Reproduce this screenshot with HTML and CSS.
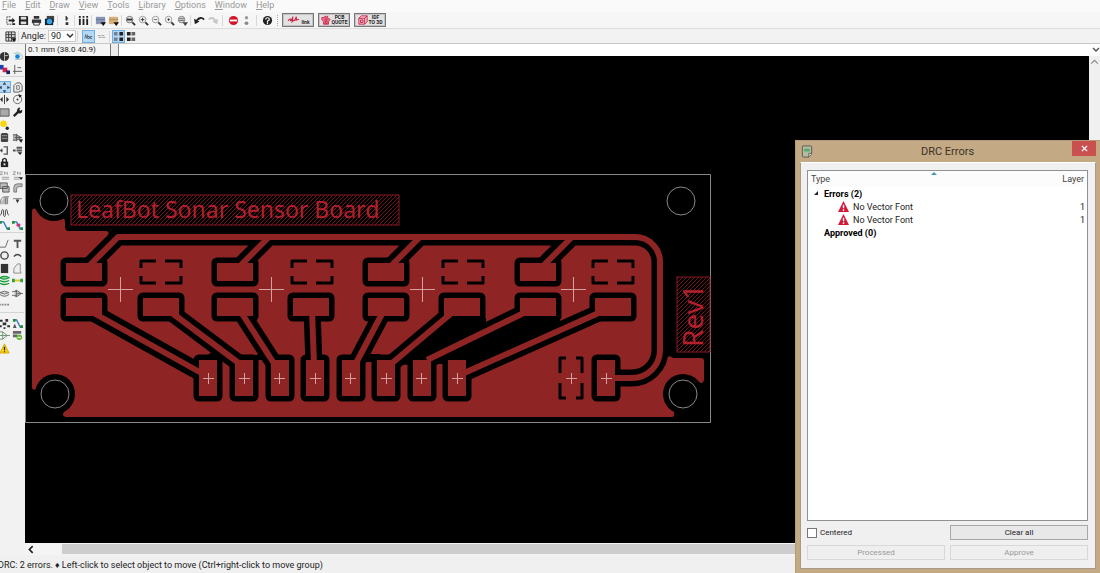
FILE: index.html
```html
<!DOCTYPE html>
<html lang="en">
<head>
  <meta charset="UTF-8">
  <meta name="viewport" content="width=device-width, initial-scale=1.0">
  <title>PCB layout - DRC Errors</title>
  <link rel="stylesheet" href="styles.css">
</head>
<body>
<div class="app">
  <nav class="menu">
    <a href="#"><u>F</u>ile</a>
    <a href="#"><u>E</u>dit</a>
    <a href="#"><u>D</u>raw</a>
    <a href="#"><u>V</u>iew</a>
    <a href="#"><u>T</u>ools</a>
    <a href="#"><u>L</u>ibrary</a>
    <a href="#"><u>O</u>ptions</a>
    <a href="#"><u>W</u>indow</a>
    <a href="#"><u>H</u>elp</a>
  </nav>

  <div class="toolbar main-tools">
    <button class="tool" aria-label="Open"><svg viewBox="0 0 12 12"><path d="M6 2H2v8h5" fill="none" stroke="#333" stroke-dasharray="2 1"/><path d="M4 5h4V3l3 3-3 3V7H4zM8 9h3v2H8z" fill="#222"/></svg></button>
    <button class="tool" aria-label="Save"><svg viewBox="0 0 12 12"><path d="M1 1h9l1 1v9H1z" fill="#222"/><path d="M3 2h6v3H3zM3 7h6v3H3z" fill="#ddd"/></svg></button>
    <button class="tool" aria-label="Print"><svg viewBox="0 0 12 12"><path d="M3 1h6v3H3zM1 5h10v4H1z" fill="#333"/><path d="M3 8h6v3H3z" fill="#eee" stroke="#333"/></svg></button>
    <button class="tool" aria-label="Snapshot"><svg viewBox="0 0 12 12"><path d="M3 1h8v7H3z" fill="#444"/><path d="M1 4h9v7H1z" fill="#123"/><circle cx="6" cy="7" r="3" fill="#38a4e8"/></svg></button>
    <span class="sep"></span>
    <button class="tool" aria-label="Move layer"><svg viewBox="0 0 12 12"><path d="M6 1l2 3H7v2H5V1zM5 8h3v3H5z" fill="#333"/></svg></button>
    <span class="sep"></span>
    <button class="tool" aria-label="Library manager"><svg viewBox="0 0 12 12"><path d="M1 1h2v2H1zM5 1h2v2H5zM9 1h2v2H9zM1 4h2v7H1zM5 4h2v7H5zM9 4h2v7H9z" fill="#222"/></svg></button>
    <span class="sep"></span>
    <button class="tool" aria-label="Layer view"><svg viewBox="0 0 12 12"><path d="M1 2h10v8H1z" fill="#8794b5"/><path d="M1 5h10" stroke="#6a7899"/><path d="M6 8h6l-3 4z" fill="#111"/></svg></button>
    <button class="tool" aria-label="Component view"><svg viewBox="0 0 12 12"><path d="M1 2h10v8H1z" fill="#dcae72"/><path d="M1 5h10" stroke="#a58f78"/><path d="M6 8h6l-3 4z" fill="#111"/></svg></button>
    <span class="sep"></span>
    <button class="tool" aria-label="Zoom area"><svg viewBox="0 0 12 12"><circle cx="5" cy="5" r="3.6" fill="#ddd" stroke="#777"/><path d="M2 4h6v2H2z" fill="#333"/><path d="M8 8l3 3" stroke="#333" stroke-width="2"/></svg></button>
    <button class="tool" aria-label="Zoom in"><svg viewBox="0 0 12 12"><circle cx="5" cy="5" r="3.6" fill="#f4f4f4" stroke="#999"/><path d="M3 5h4M5 3v4" stroke="#333"/><path d="M8 8l3 3" stroke="#333" stroke-width="2"/></svg></button>
    <button class="tool" aria-label="Zoom out"><svg viewBox="0 0 12 12"><circle cx="5" cy="5" r="3.6" fill="#f4f4f4" stroke="#999"/><path d="M3 5h4" stroke="#666"/><path d="M8 8l3 3" stroke="#333" stroke-width="2"/></svg></button>
    <button class="tool" aria-label="Zoom point"><svg viewBox="0 0 12 12"><circle cx="5" cy="5" r="3.6" fill="#f4f4f4" stroke="#999"/><circle cx="5" cy="5" r="1.2" fill="#222"/><path d="M8 8l3 3" stroke="#333" stroke-width="2"/></svg></button>
    <button class="tool" aria-label="Zoom all"><svg viewBox="0 0 12 12"><circle cx="5" cy="5" r="3.6" fill="#ccc" stroke="#888"/><path d="M2 4h6M2 6h6" stroke="#777"/><path d="M6 8h6l-3 4z" fill="#444"/></svg></button>
    <span class="sep"></span>
    <button class="tool" aria-label="Undo"><svg viewBox="0 0 12 12"><path d="M3 6q4-5 8-1" fill="none" stroke="#222" stroke-width="2"/><path d="M0 4l6 3-5 3z" fill="#222"/></svg></button>
    <button class="tool" aria-label="Redo" disabled><svg viewBox="0 0 12 12"><path d="M9 6Q5 1 2 5" fill="none" stroke="#c4c4c4" stroke-width="2"/><path d="M12 4L6 7l5 3z" fill="#c4c4c4"/></svg></button>
    <span class="sep wide"></span>
    <button class="tool" aria-label="Cancel"><svg viewBox="0 0 12 12"><circle cx="6" cy="6" r="5" fill="#d3122a"/><path d="M2 5h8v2H2z" fill="#fff"/></svg></button>
    <button class="tool" aria-label="Signal"><svg viewBox="0 0 12 12"><circle cx="6" cy="3" r="1.8" fill="#999"/><circle cx="6" cy="9" r="2" fill="#888"/></svg></button>
    <span class="sep wide"></span>
    <button class="tool" aria-label="Help"><svg viewBox="0 0 12 12"><circle cx="6" cy="6" r="5" fill="#222"/><path d="M4 5q0-2 2-2t2 1.500-2 2v1M6 8v2" fill="none" stroke="#fff" stroke-width="1.300"/></svg></button>
    <span class="sep wide dotted"></span>
    <button class="badge"><svg class="wide-mark" viewBox="0 0 14 12"><path d="M1 7q3-4 3-1t3-4l-1 6q3-3 3-1l2-5v4l3-1" fill="none" stroke="#d02045" stroke-width="1.300"/></svg><span class="low">link</span></button>
    <button class="badge"><svg viewBox="0 0 12 12"><path d="M1 3h3l1-2 1 2 2-2v3l3 1-2 3v3H3V8L1 6z" fill="#e08095" stroke="#d02045"/><path d="M5 4v7M7 4v7" stroke="#c91840"/></svg><span>PCB<br>QUOTE</span></button>
    <button class="badge"><svg viewBox="0 0 12 12"><path d="M1 4l3-3h7v7l-3 3H1zM1 4h7v7M8 4l3-3M3 6h3v3H3z" fill="#f0bfc9" stroke="#c91840"/></svg><span>IDF<br>TO 3D</span></button>
  </div>

  <div class="toolbar angle-tools">
    <button class="tool" aria-label="Grid"><svg viewBox="0 0 12 12"><path d="M1 1h10v10H1zM1 4h10M1 7h10M4 1v10M7 1v10" fill="#ddd" stroke="#333"/><path d="M7 8h5l-2 4z" fill="#111"/></svg></button>
    <span class="sep"></span>
    <label for="angle">Angle:</label>
    <span class="pick">
      <select id="angle" class="angle"><option>90</option><option>45</option></select>
      <svg class="chevron" viewBox="0 0 8 8"><path d="M1 2l3 3 3-3" fill="none" stroke="#333" stroke-width="1.500"/></svg>
    </span>
    <span class="sep wide"></span>
    <button class="tool on" aria-label="Show text"><svg viewBox="0 0 12 12"><path d="M2 8l1-4 1 4M5 4v4h2V6H5M10 6H8v2h2" fill="none" stroke="#567"/></svg></button>
    <button class="tool" aria-label="Hide text"><svg viewBox="0 0 12 12"><path d="M2 5h8M3 7h8" stroke="#999" stroke-dasharray="3 1"/></svg></button>
    <span class="sep"></span>
    <button class="tool on" aria-label="Pad view"><svg viewBox="0 0 12 12"><path d="M1 1h4v4H1zM1 7h4v4H1z" fill="#6e8299"/><path d="M7 1h4v4H7zM7 7h4v4H7z" fill="#222"/></svg></button>
    <button class="tool" aria-label="Outline view"><svg viewBox="0 0 12 12"><path d="M1 1h4v4H1zM1 7h4v4H1z" fill="#222"/><path d="M6 1h4v4H6zM6 7h4v4H6z" fill="#666"/></svg></button>
  </div>

  <div class="workspace">
    <aside class="side">
      <div class="group rows-2">
        <button class="tool" aria-label="3D"><svg viewBox="0 0 12 12"><circle cx="6" cy="6" r="5" fill="#333"/><path d="M6 1v10M6 5h4" stroke="#bbb"/></svg></button>
        <button class="tool" aria-label="Web"><svg viewBox="0 0 12 12"><path d="M2 3q5-3 9 2t-8 4" fill="#eee" stroke="#9bb"/><circle cx="6" cy="6" r="2.500" fill="#1687d8"/></svg></button>
        <button class="tool" aria-label="Colors"><svg viewBox="0 0 12 12"><path d="M0 1h5v5H0z" fill="#1543b5"/><path d="M4 4h5v5H4z" fill="#d81e4e"/><path d="M8 7h4v4H8z" fill="#126"/></svg></button>
        <button class="tool" aria-label="Origin"><svg viewBox="0 0 12 12"><path d="M3 1v10M1 8h10M6 4h4" stroke="#555"/></svg></button>
      </div>
      <div class="group rows-12">
        <button class="tool on" aria-label="Move"><svg viewBox="0 0 12 12"><path d="M6 0l2 3H4zM6 12l2-3H4zM0 6l3-2v4zM12 6L9 4v4z" fill="#345"/></svg></button>
        <button class="tool" aria-label="Copy"><svg viewBox="0 0 12 12"><path d="M2 4l3-3h4l2 3v6H8v1H2z" fill="#eee" stroke="#555"/><path d="M5 4h3v4H5z" fill="none" stroke="#777"/></svg></button>
        <button class="tool" aria-label="Mirror"><svg viewBox="0 0 12 12"><path d="M6 1v10" stroke="#333"/><path d="M4 3v6L1 6zM8 3v6l3-3z" fill="#333"/></svg></button>
        <button class="tool" aria-label="Rotate"><svg viewBox="0 0 12 12"><circle cx="6" cy="6" r="4.500" fill="none" stroke="#666"/><circle cx="6" cy="6" r="1" fill="#222"/><path d="M7 0l4 2-3 2z" fill="#222"/></svg></button>
        <button class="tool" aria-label="Area"><svg viewBox="0 0 12 12"><path d="M1 2h10v8H1z" fill="#aaa" stroke="#555"/></svg></button>
        <button class="tool" aria-label="Properties"><svg viewBox="0 0 12 12"><path d="M2 10l5-5" stroke="#222" stroke-width="2.500"/><path d="M6 2q2-2 3-1L8 3l1 1 2-1q1 4-3 4T6 2" fill="#222"/></svg></button>
        <button class="tool" aria-label="Highlight net"><svg viewBox="0 0 12 12"><circle cx="5" cy="4" r="3.500" fill="#f7d707"/><circle cx="9" cy="9" r="1.800" fill="#222"/></svg></button>
        <span></span>
        <button class="tool" aria-label="Delete"><svg viewBox="0 0 12 12"><path d="M3 1h6v1h1v8l-1 1H3l-1-1V2h1z" fill="#444"/><path d="M3 4h6M3 7h6" stroke="#999"/></svg></button>
        <button class="tool" aria-label="Gate swap"><svg viewBox="0 0 12 12"><path d="M1 3h4l5 3-5 3H1M5 2v8M3 6h8" fill="#aaa" stroke="#555"/><path d="M7 8h5l-2 4z" fill="#222"/></svg></button>
        <button class="tool" aria-label="Connector"><svg viewBox="0 0 12 12"><path d="M0 6h4M5 2h4v8H5M3 4v4" fill="none" stroke="#555" stroke-width="1.500"/></svg></button>
        <button class="tool" aria-label="Align"><svg viewBox="0 0 12 12"><path d="M1 6h3M5 3h6M5 6h6" stroke="#555" stroke-width="2"/><path d="M6 8h5l-2 3z" fill="#222"/></svg></button>
        <button class="tool" aria-label="Lock"><svg viewBox="0 0 12 12"><path d="M4 6V3q2-3 4 0v3" fill="none" stroke="#222" stroke-width="1.500"/><path d="M2 5h8v6H2z" fill="#222"/><path d="M5 7h2v2H5z" fill="#eee"/></svg></button>
        <span></span>
        <button class="tool" aria-label="Rename"><svg viewBox="0 0 12 12"><path d="M1 2h3L1 5h3M6 5V2l3 3V2M3 8h8M3 10h8" fill="none" stroke="#999"/></svg></button>
        <button class="tool" aria-label="Renumber"><svg viewBox="0 0 12 12"><path d="M1 2h3L1 5h3M6 5V2l3 3V2M2 8h6M2 10h6" fill="none" stroke="#999"/><path d="M7 8h5l-2 3z" fill="#222"/></svg></button>
        <button class="tool" aria-label="Duplicate"><svg viewBox="0 0 12 12"><path d="M1 1h8v6H1zM4 5h7v6H4z" fill="#bbb" stroke="#555"/></svg></button>
        <button class="tool" aria-label="Fillet"><svg viewBox="0 0 12 12"><path d="M2 11V6q0-4 4-4h5v3H8Q5 5 5 8v3z" fill="#bbb" stroke="#777"/></svg></button>
        <button class="tool" aria-label="Chamfer"><svg viewBox="0 0 12 12"><path d="M1 10h9V2H6z" fill="#bbb"/><path d="M1 10q1-8 5-8h5M7 3v7M9 3v7" fill="none" stroke="#777"/></svg></button>
        <button class="tool" aria-label="Break"><svg viewBox="0 0 12 12"><path d="M1 4h10" stroke="#777"/><path d="M4 5h4L6 9z" fill="#333"/></svg></button>
        <button class="tool" aria-label="Meander"><svg viewBox="0 0 12 12"><path d="M1 8q2 0 2-5 1-3 2 0v5q1 3 2 0V3q1-3 2 0 0 5 2 5" fill="none" stroke="#444"/></svg></button>
        <span></span>
        <button class="tool" aria-label="Route"><svg viewBox="0 0 12 12"><path d="M2 2h3l4 8h2" fill="none" stroke="#3578c8" stroke-width="1.500"/><path d="M0 1h3v3H0zM9 8h3v3H9z" fill="#208b3e"/></svg></button>
        <button class="tool" aria-label="Edit route"><svg viewBox="0 0 12 12"><path d="M2 2h3l4 8h2" fill="none" stroke="#3578c8" stroke-width="1.500"/><path d="M0 1h3v3H0zM9 8h3v3H9z" fill="#208b3e"/><path d="M5 4h4v3H5z" fill="#d42c73"/></svg></button>
      </div>
      <div class="group rows-6">
        <button class="tool" aria-label="Line"><svg viewBox="0 0 12 12"><path d="M1 10h6l3-8" fill="none" stroke="#666"/></svg></button>
        <button class="tool" aria-label="Text"><svg viewBox="0 0 12 12"><path d="M2 2h8v2H7v7H5V4H2z" fill="#555"/></svg></button>
        <button class="tool" aria-label="Circle"><svg viewBox="0 0 12 12"><circle cx="6" cy="6" r="4" fill="#eee" stroke="#444" stroke-width="1.500"/></svg></button>
        <button class="tool" aria-label="Arc"><svg viewBox="0 0 12 12"><path d="M2 7q4-4 8 0" fill="none" stroke="#444" stroke-width="1.500"/></svg></button>
        <button class="tool" aria-label="Rectangle"><svg viewBox="0 0 12 12"><path d="M2 1h8v10H2z" fill="#333"/></svg></button>
        <button class="tool" aria-label="Polygon"><svg viewBox="0 0 12 12"><path d="M2 11V6l4-5h3v7l1 3z" fill="#eee" stroke="#888"/></svg></button>
        <button class="tool" aria-label="Copper layer"><svg viewBox="0 0 12 12"><path d="M1 3q5-3 10 0-5 3-10 0M1 6q5 3 10 0M1 9q5 3 10 0" fill="#9fd9a8" stroke="#189a38" stroke-width="1.500"/></svg></button>
        <button class="tool" aria-label="Jumper"><svg viewBox="0 0 12 12"><path d="M2 6h8" stroke="#e6c51b" stroke-width="2"/><path d="M0 4h3v4H0zM9 4h3v4H9z" fill="#27a244"/></svg></button>
        <button class="tool" aria-label="Plane"><svg viewBox="0 0 12 12"><path d="M1 5q5-3 10 0-5 3-10 0M1 7q5 4 10 0" fill="#ddd" stroke="#666"/></svg></button>
        <button class="tool" aria-label="Component"><svg viewBox="0 0 12 12"><path d="M3 3h3l4 3-4 3H3M5 2v8M0 4h5M0 8h5M6 6h6" fill="#bbb" stroke="#666"/></svg></button>
        <button class="tool" aria-label="Dimension"><svg viewBox="0 0 12 12"><path d="M0 5h11" stroke="#888" stroke-width="2" stroke-dasharray="2 1"/></svg></button>
        <span></span>
      </div>
      <div class="group rows-3">
        <button class="tool" aria-label="Autoplace"><svg viewBox="0 0 12 12"><path d="M1 2h3v2H1zM7 1h3v3H7zM4 5h4v3H4zM0 8h3v2H0zM9 8h3v2H9zM5 10h2v2H5z" fill="#333"/></svg></button>
        <button class="tool" aria-label="Autoroute"><svg viewBox="0 0 12 12"><path d="M2 2h3l4 8h2" fill="none" stroke="#3578c8" stroke-width="1.500"/><path d="M1 1h3v3H1zM9 8h3v3H9z" fill="#208b3e"/><path d="M1 11l2-5 2 5z" fill="#555"/></svg></button>
        <button class="tool" aria-label="Simulate"><svg viewBox="0 0 12 12"><path d="M1 2h3l5 4-5 4H1M0 6h12M4 2v8" fill="none" stroke="#68906c"/></svg></button>
        <button class="tool" aria-label="Add part"><svg viewBox="0 0 12 12"><path d="M1 1h9v3H1zM1 5h5v3H1z" fill="#666"/><circle cx="8" cy="8" r="3" fill="#63b52d"/><path d="M6 8h4" stroke="#fff"/></svg></button>
        <button class="tool" aria-label="Design rule check"><svg viewBox="0 0 12 12"><path d="M6 1l5 10H1z" fill="#f8cf12" stroke="#d9a900"/><path d="M6 4v4M6 9v1" stroke="#222" stroke-width="1.300"/></svg></button>
        <span></span>
      </div>
    </aside>

    <main class="editor">
      <div class="coords">
        <span class="position">0.1 mm (38.0 40.9)</span>
        <span class="grip"></span>
        <span class="pick history">
          <select class="message" aria-label="Message history"><option></option></select>
          <svg class="chevron" viewBox="0 0 8 8"><path d="M1 2l3 3 3-3" fill="none" stroke="#555" stroke-width="1.500"/></svg>
        </span>
      </div>
      <div class="view">
        <div class="canvas">
          <svg class="board" viewBox="25 56 1064 487" preserveAspectRatio="xMinYMin slice">
            <defs>
              <pattern id="hatch" width="4" height="4" patternUnits="userSpaceOnUse">
                <path d="M-1 1l2-2M0 4l4-4M3 5l2-2" stroke="#6c141d"/>
              </pattern>
              <g id="cross"><path d="M-12 0h25M0-12v25"/></g>
              <g id="small-cross"><path d="M-5 0h11M0-5v11"/></g>
              <path id="thermal" d="M-20-4v-7h15M4-11h16v7M20 4v7H4M-5 11h-15V4"/>
              <rect id="pad" x="-18" y="-9" width="36" height="18"/>
              <rect id="pin" x="-9" y="-18" width="18" height="36"/>
              <g id="pads">
                <use href="#pad" x="84" y="272"/><use href="#pad" x="235" y="272"/><use href="#pad" x="386" y="272"/><use href="#pad" x="538" y="272"/>
                <use href="#pad" x="84" y="307"/><use href="#pad" x="161" y="307"/><use href="#pad" x="235" y="307"/><use href="#pad" x="311" y="307"/>
                <use href="#pad" x="386" y="307"/><use href="#pad" x="462" y="307"/><use href="#pad" x="538" y="307"/><use href="#pad" x="613" y="307"/>
                <use href="#pin" x="208" y="378"/><use href="#pin" x="244" y="378"/><use href="#pin" x="280" y="378"/><use href="#pin" x="315" y="378"/>
                <use href="#pin" x="351" y="378"/><use href="#pin" x="386" y="378"/><use href="#pin" x="422" y="378"/><use href="#pin" x="457" y="378"/>
                <use href="#pin" x="606" y="378"/>
              </g>
              <path id="tracks" d="M87 268l31-31H635a25 25 0 0 1 25 25V350a28 28 0 0 1-28 28H610M238 268l31-31M389 268l31-31M541 268l31-31M90 311L205 375M168 310L240 364M239 309L275 365M312 310L314 365M384 310L355 365M454 311L391 364M530 310L427 360M603 311L462 374"/>
            </defs>
            <!-- copper pour -->
            <path class="copper" d="M32 212q0-5 4-3L54 201 64 219q1 0 1 3v5q0 4 4 4H106q4 0 2 4l8 4 2-2H635a25 25 0 0 1 25 25V350l8 7q2-2 5 1H701q3 0 3 3V380q-1 5-5 2L683 395 674 413q1 4-3 4H66q-5-1-2-5L56 395 38 388q-6 4-6-1z"/>
            <g class="gap">
              <circle cx="54" cy="201" r="20"/>
              <circle cx="55" cy="394" r="20"/>
              <circle cx="683" cy="394" r="20"/>
              <path d="M395 365L454 316 486 318V334L438 364zM430 364L525 316 560 318V326L466 372 448 364zM364 362V358L370 354H380V362zM208 355l5-4 10 5v4h-15zM256 355l6-2 6 7h-12z"/>
            </g>
            <use href="#pads" class="pad-gap"/>
            <use href="#tracks" class="track-gap"/>
            <use href="#pads" class="copper"/>
            <use href="#tracks" class="track"/>
            <g class="thermals">
              <use href="#thermal" x="161" y="272"/><use href="#thermal" x="312" y="272"/><use href="#thermal" x="463" y="272"/><use href="#thermal" x="613" y="272"/>
              <path d="M560 373V358h6M576 358h6v15M582 383v15h-6M566 398h-6V383"/>
            </g>
            <g class="crosses">
              <use href="#cross" x="120" y="289"/><use href="#cross" x="271" y="289"/><use href="#cross" x="422" y="289"/><use href="#cross" x="573" y="289"/>
              <use href="#small-cross" x="208" y="378"/><use href="#small-cross" x="244" y="378"/><use href="#small-cross" x="279" y="378"/><use href="#small-cross" x="315" y="378"/>
              <use href="#small-cross" x="350" y="378"/><use href="#small-cross" x="386" y="378"/><use href="#small-cross" x="421" y="378"/><use href="#small-cross" x="457" y="378"/>
              <use href="#small-cross" x="571" y="378"/><use href="#small-cross" x="606" y="378"/>
            </g>
            <!-- outline and drill holes -->
            <g class="outline">
              <path d="M25.500 174.500H710.500V422.500H25.500z"/>
              <circle cx="54" cy="201" r="14"/>
              <circle cx="681" cy="201" r="14"/>
              <circle cx="55" cy="394" r="14"/>
              <circle cx="683" cy="394" r="14"/>
            </g>
            <!-- text that has no vector font -->
            <rect class="text-box" x="71" y="195" width="328" height="30"/>
            <text class="silk" x="76" y="218">LeafBot Sonar Sensor Board</text>
            <rect class="text-box" x="677" y="277" width="33" height="75"/>
            <text class="silk rev" transform="translate(703 347) rotate(-90)">Rev1</text>
          </svg>
        </div>
        <div class="scroll-v"><svg viewBox="0 0 10 10"><path d="M2 7l3-3 3 3" fill="none" stroke="#888"/></svg></div>
      </div>
      <div class="scroll-h"><svg viewBox="0 0 10 10"><path d="M7 2L4 5l3 3" fill="none" stroke="#222" stroke-width="1.500"/></svg><span class="thumb"></span></div>
    </main>
  </div>

  <footer class="status"><span>DRC: 2 errors.</span><span>&#9830; Left-click to select object to move (Ctrl+right-click to move group)</span></footer>
</div>

<section class="dialog" role="dialog" aria-labelledby="dialog-title">
  <header class="dialog-head">
    <svg class="dialog-icon" viewBox="0 0 12 14"><path d="M2 1h8q1 0 1 1v8l-3 3H2q-1 0-1-1V2q0-1 1-1z" fill="#b5bd9c" stroke="#555"/><path d="M3 4h6v3H3z" fill="#58a878"/><path d="M11 9H8v4" fill="#eee" stroke="#555"/></svg>
    <h1 id="dialog-title">DRC Errors</h1>
    <button class="close" aria-label="Close"><svg viewBox="0 0 8 8"><path d="M1 1l6 6M7 1L1 7" stroke="#fff" stroke-width="1.600"/></svg></button>
  </header>
  <div class="dialog-body">
    <div class="list">
      <svg class="sort" viewBox="0 0 6 4"><path d="M0 4l3-3 3 3z" fill="#4598b8"/></svg>
      <table class="errors">
        <thead>
          <tr><th>Type</th><th class="layer">Layer</th></tr>
        </thead>
        <tbody>
          <tr class="parent"><td><svg class="arrow" viewBox="0 0 6 6"><path d="M5 1v4H1z" fill="#222"/></svg>Errors (2)</td><td></td></tr>
          <tr><td class="child"><svg class="warn" viewBox="0 0 12 12"><path d="M6 0l6 12H0z" fill="#d3183a"/><path d="M6 4v4M6 9v2" stroke="#fff" stroke-width="1.500"/></svg>No Vector Font</td><td class="layer">1</td></tr>
          <tr><td class="child"><svg class="warn" viewBox="0 0 12 12"><path d="M6 0l6 12H0z" fill="#d3183a"/><path d="M6 4v4M6 9v2" stroke="#fff" stroke-width="1.500"/></svg>No Vector Font</td><td class="layer">1</td></tr>
          <tr class="parent"><td class="no-arrow">Approved (0)</td><td></td></tr>
        </tbody>
      </table>
    </div>
    <div class="actions">
      <label class="centered"><input type="checkbox">Centered</label>
      <button>Clear all</button>
      <button disabled>Processed</button>
      <button disabled>Approve</button>
    </div>
  </div>
</section>
</body>
</html>
```
FILE: styles.css
```css
* { box-sizing: border-box; }
body { margin: 0; font-family: Roboto, "Open Sans", sans-serif; font-size: 9px; line-height: 12px; color: #222; background: #f0f0f0; overflow: hidden; }
button, select, input { font: inherit; color: inherit; margin: 0; padding: 0; }
svg { display: block; }
.app { display: flex; flex-direction: column; height: 100vh; }

/* menu and toolbars */
.menu { display: flex; gap: 9px; height: 12px; padding-left: 2px; background: #fafafa; line-height: 10px; }
.menu a { color: #999; text-decoration: none; }
.toolbar { display: flex; align-items: center; padding-left: 4px; background: #f2f2f2; border-bottom: 1px solid #c8c8c8; flex: none; }
.main-tools { height: 17px; background: #f6f6f6; border-color: #ddd; }
.angle-tools { height: 15px; }
.tool { display: flex; align-items: center; justify-content: center; width: 13px; height: 13px; border: 0; background: none; flex: none; }
.tool svg { width: 11px; height: 11px; flex: none; }
.tool.on { background: #b5d9f5; border: 1px solid #70aee0; }
.sep { width: 1px; height: 11px; margin: 0 2px 0 1px; background: #d8d8d8; flex: none; }
.sep.wide { margin: 0 4px 0 3px; }
.sep.dotted { background: none; border-left: 1px dotted #aaa; }
.badge { display: flex; align-items: center; justify-content: center; gap: 1px; width: 32px; height: 14px; margin: 0 4px 0 0; border: 1px solid #777; background: #e2e2e2; box-shadow: inset 0 0 0 1px #c4c4c4; font-size: 5px; line-height: 5px; font-weight: bold; }
.badge svg { width: 10px; height: 10px; flex: none; }
.badge .wide-mark { width: 14px; }
.badge .low { padding-top: 5px; }
.pick { display: flex; align-items: center; }
.chevron { width: 8px; height: 8px; margin-left: -10px; pointer-events: none; }
.angle { width: 28px; height: 12px; margin-left: 2px; border: 1px solid #ccc; background: #fff; appearance: none; padding-left: 2px; line-height: 10px; }

/* workspace */
.workspace { display: flex; flex: 1; min-height: 0; }
.side { width: 25px; padding-top: 6px; overflow: hidden; flex: none; background: #f2f2f2; }
.side .tool { height: 12px; }
.group { display: grid; grid-template-columns: 13px 13px; grid-auto-rows: 1fr; justify-content: end; align-items: center; margin: 0 1px 4px -3px; border-bottom: 1px solid #d4d4d4; }
.rows-2 { height: 27px; }
.rows-12 { height: 152px; }
.rows-6 { height: 76px; }
.rows-3 { height: 38px; border: 0; }
.editor { display: flex; flex-direction: column; flex: 1; min-width: 0; }
.coords { display: flex; height: 12px; background: #fff; line-height: 12px; flex: none; }
.position { width: 86px; padding-left: 2px; border-left: 1px solid #777; border-right: 1px solid #777; background: #f4f4f4; font-size: 8px; white-space: nowrap; }
.grip { width: 8px; background: #eee; border-right: 1px solid #888; }
.history { flex: 1; }
.message { flex: 1; height: 12px; border: 0; background: #fff; appearance: none; }
.view { display: flex; flex: 1; min-height: 0; }
.canvas { flex: 1; min-width: 0; overflow: hidden; background: #000; }
.board { width: 100%; height: 100%; }
.scroll-v { width: 11px; background: #f0f0f0; flex: none; }
.scroll-v svg, .scroll-h svg { width: 11px; height: 11px; flex: none; }
.scroll-h { display: flex; align-items: center; height: 12px; background: #f4f4f4; flex: none; }
.thumb { flex: 1; height: 10px; margin-left: 26px; background: #cdcdcd; }
.status { display: flex; gap: 4px; height: 18px; line-height: 20px; background: #f0f0f0; text-indent: -2px; white-space: nowrap; flex: none; }

/* board */
.copper { fill: #8e2424; }
.gap { fill: #000; }
.pad-gap { fill: #000; stroke: #000; stroke-width: 11; stroke-linejoin: round; }
.track-gap, .track { fill: none; stroke: #000; stroke-width: 17; stroke-linejoin: round; }
.track { stroke: #8e2424; stroke-width: 6; }
.thermals { fill: none; stroke: #000; stroke-width: 3; stroke-linejoin: round; }
.crosses { fill: none; stroke: #d5a0a0; shape-rendering: crispEdges; }
.outline { fill: none; stroke: #888; }
.text-box { fill: url(#hatch); stroke: #8a1a24; }
.silk { font-family: "Noto Sans", sans-serif; font-size: 23px; fill: #b3202c; }
.rev { font-size: 28px; }

/* DRC dialog, floats above the editor */
.dialog { position: absolute; top: 140px; right: 0; bottom: 0; display: flex; flex-direction: column; width: 305px; padding: 0 4px 4px; background: #c4a985; border: 1px solid #b59a78; border-width: 1px 0 0 1px; }
.dialog-head { display: flex; align-items: center; height: 21px; flex: none; }
.dialog-head h1 { flex: 1; margin: 0; padding-left: 10px; font-size: 11px; font-weight: normal; text-align: center; color: #3c3226; }
.dialog-icon { width: 12px; height: 13px; margin-left: 1px; }
.close { display: flex; align-items: center; justify-content: center; align-self: flex-start; width: 24px; height: 15px; border: 0; background: #c9504f; }
.close svg { width: 7px; height: 7px; }
.dialog-body { display: flex; flex-direction: column; flex: 1; gap: 4px; padding: 7px 7px 8px 6px; background: #f0f0f0; border: 1px solid #a99a86; border-top-color: #fff; }
.list { position: relative; flex: 1; border: 1px solid #8c9296; background: #fff; }
.sort { position: absolute; top: 0; left: 123px; width: 6px; height: 4px; }
.errors { width: 100%; border-collapse: collapse; }
.errors td { height: 13px; padding: 0 2px; }
.errors th { height: 16px; padding: 0 3px; background: #fcfcfc; color: #444; font-weight: normal; text-align: left; }
.errors .layer { text-align: right; }
.errors .parent td { font-weight: bold; color: #000; }
.arrow, .warn { display: inline-block; vertical-align: -2px; }
.arrow { width: 6px; height: 6px; margin: 0 5px 0 3px; vertical-align: 1px; }
.errors .no-arrow { padding-left: 16px; }
.errors .child { padding-left: 30px; }
.warn { width: 11px; height: 11px; margin-right: 4px; }
.actions { display: grid; grid-template-columns: 1fr 1fr; gap: 5px; font-size: 8px; }
.actions button { height: 15px; border: 1px solid #a8a8a8; background: #e8e8e8; line-height: 12px; }
.actions button:disabled { border-color: #d8d8d8; background: #efefef; color: #999; }
.centered { display: flex; align-items: center; gap: 3px; }
.centered input { width: 10px; height: 10px; border: 1px solid #777; background: #fff; appearance: none; }
```
